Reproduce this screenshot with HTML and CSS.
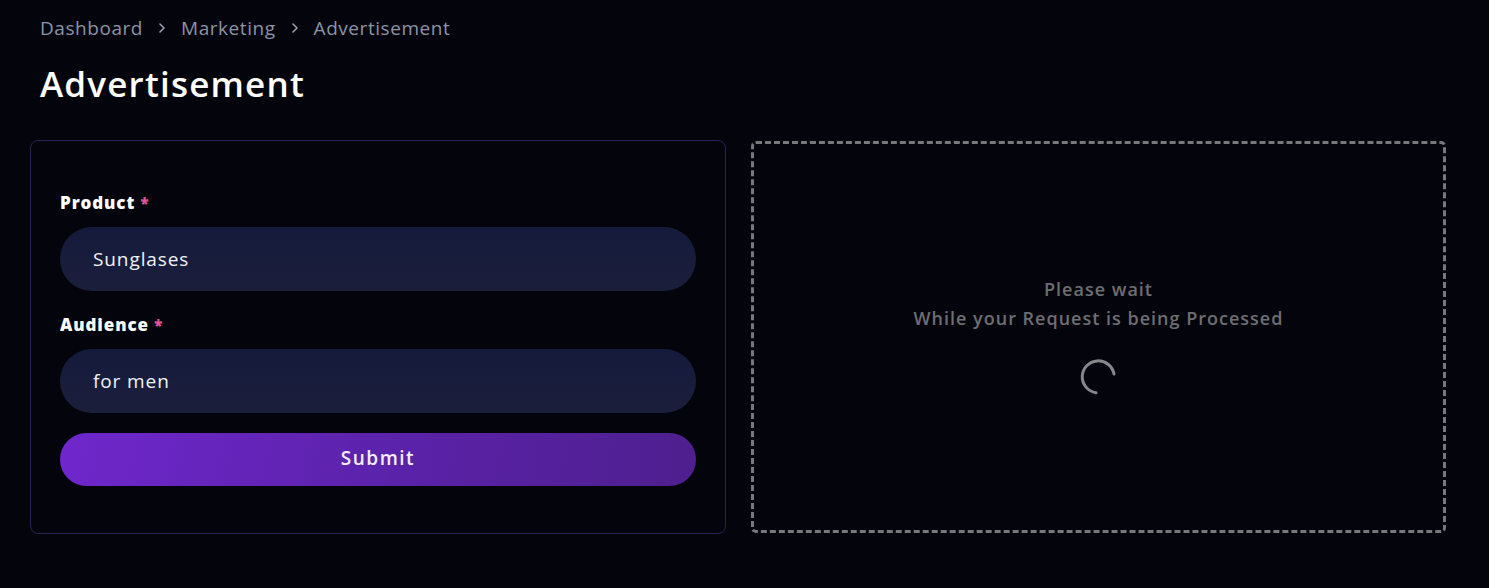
FILE: index.html
```html
<!DOCTYPE html>
<html lang="en">
<head>
<meta charset="utf-8">
<title>Advertisement</title>
<link rel="stylesheet" href="styles.css">
</head>
<body>
<main class="page">
  <nav class="crumbs">
    <span class="crumb">Dashboard</span>
    <svg class="chev" viewBox="0 0 12 12" width="12" height="12"><path d="M4 2l4 4-4 4" fill="none" stroke="currentColor" stroke-width="1.6" stroke-linecap="round" stroke-linejoin="round"/></svg>
    <span class="crumb">Marketing</span>
    <svg class="chev" viewBox="0 0 12 12" width="12" height="12"><path d="M4 2l4 4-4 4" fill="none" stroke="currentColor" stroke-width="1.6" stroke-linecap="round" stroke-linejoin="round"/></svg>
    <span class="crumb">Advertisement</span>
  </nav>
  <h1 class="title">Advertisement</h1>
  <section class="grid">
    <form class="card">
      <label class="label">Product <span class="req">*</span></label>
      <div class="input">Sunglases</div>
      <label class="label label-2">Audience <span class="req">*</span></label>
      <div class="input">for men</div>
      <button type="button" class="submit">Submit</button>
    </form>
    <div class="result">
      <p class="wait">Please wait</p>
      <p class="wait">While your Request is being Processed</p>
      <svg class="spinner" viewBox="0 0 40 40" width="40" height="40">
        <path d="M35 17 A 16 16 0 1 0 17 35.7" fill="none" stroke="#86868b" stroke-width="3" stroke-linecap="round"/>
      </svg>
    </div>
  </section>
</main>
</body>
</html>
```

FILE: styles.css
```css
html, body {
  margin: 0;
  padding: 0;
  background: #04050c;
  font-family: "Open Sans", "Noto Sans", sans-serif;
  color: #fff;
}
.page {
  padding: 13px 44px 0 30px;
}
.crumbs {
  display: flex;
  align-items: center;
  gap: 13px;
  padding-left: 10px;
  height: 30px;
  color: #8c93a6;
  font-size: 19px;
  letter-spacing: 0.55px;
}
.chev {
  color: #9aa0b0;
  width: 12px;
  height: 12px;
}
.title {
  margin: 20px 0 0 10px;
  font-size: 35px;
  font-weight: 600;
  line-height: 42px;
  letter-spacing: 1.2px;
}
.grid {
  display: grid;
  grid-template-columns: 696px 695px;
  align-items: start;
  gap: 25px;
  margin-top: 35px;
}
.card {
  border: 1px solid #2c2254;
  border-radius: 8px;
  padding: 50px 29px 47px 29px;
  display: flex;
  flex-direction: column;
  height: 394px;
  box-sizing: border-box;
}
.label {
  font-size: 17px;
  font-weight: 800;
  line-height: 24px;
  margin-bottom: 12px;
  letter-spacing: 0.9px;
}
.label-2 {
  margin-top: 22px;
}
.req {
  color: #e0559b;
  font-size: 15px;
}
.input {
  height: 64px;
  border-radius: 32px;
  background: linear-gradient(180deg, #151a3c 0%, #1b1f3b 100%);
  display: flex;
  align-items: center;
  padding-left: 33px;
  font-size: 19px;
  color: #f2f2f7;
  letter-spacing: 0.9px;
}
.submit {
  margin-top: 20px;
  height: 53px;
  border: 0;
  border-radius: 27px;
  background: linear-gradient(100deg, #6f27cc 0%, #5a22a8 55%, #4e1f8e 100%);
  color: #f4eefc;
  font-family: inherit;
  font-size: 19px;
  font-weight: 600;
  letter-spacing: 1.5px;
  padding: 0 0 3px;
}
.result {
  border: 3px dashed #77777c;
  border-radius: 5px;
  height: 392px;
  box-sizing: border-box;
  margin-top: 1px;
  display: flex;
  flex-direction: column;
  align-items: center;
  padding-top: 131px;
}
.wait {
  margin: 0;
  font-size: 18px;
  font-weight: 600;
  color: #6d6e73;
  line-height: 29px;
  letter-spacing: 1px;
}
.spinner {
  margin-top: 24px;
  width: 40px;
  height: 40px;
}
```
